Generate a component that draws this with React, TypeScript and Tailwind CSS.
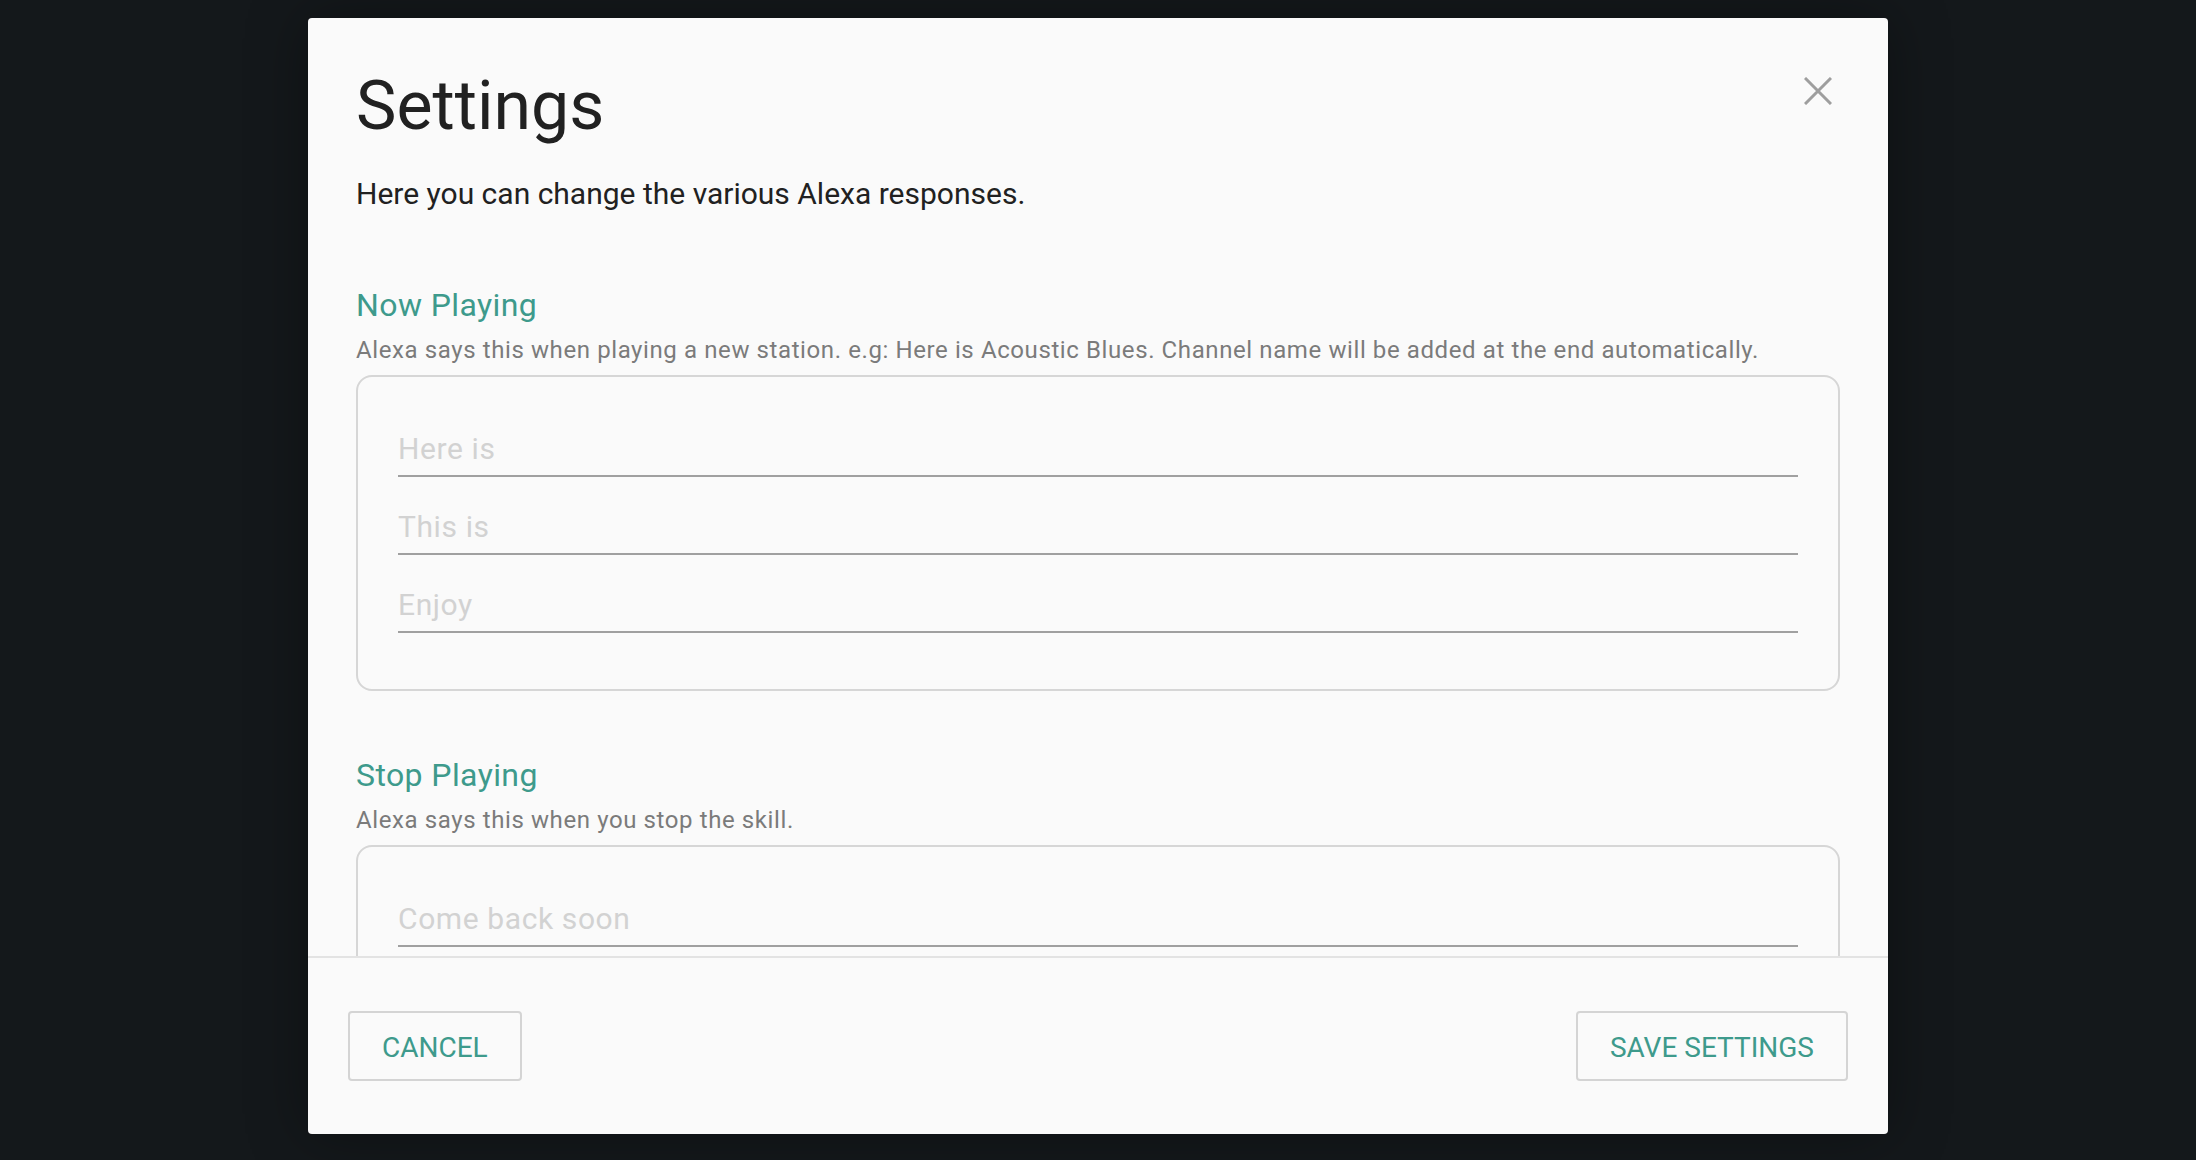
import { useState } from 'react';

interface Section {
  id: string;
  title: string;
  hint: string;
  placeholders: string[];
}

const sections: Section[] = [
  {
    id: 'now',
    title: 'Now Playing',
    hint: 'Alexa says this when playing a new station. e.g: Here is Acoustic Blues. Channel name will be added at the end automatically.',
    placeholders: ['Here is', 'This is', 'Enjoy'],
  },
  {
    id: 'stop',
    title: 'Stop Playing',
    hint: 'Alexa says this when you stop the skill.',
    placeholders: ['Come back soon', 'Goodbye'],
  },
];

export default function App() {
  const [values, setValues] = useState<Record<string, string>>({});

  const update = (key: string, value: string) => {
    setValues(prev => ({ ...prev, [key]: value }));
  };

  return (
    <div
      className="min-h-screen bg-[#14181b] flex justify-center pt-[18px]"
      style={{ fontFamily: 'Roboto, "Liberation Sans", sans-serif' }}
    >
      <div className="relative w-[1580px] h-[1116px] bg-[#fafafa] rounded-[4px] shadow-[0_0_60px_rgba(0,0,0,0.35)] flex flex-col overflow-hidden">
        {/* close */}
        <button className="absolute top-[59px] right-[56px] w-[28px] h-[28px]">
          <svg viewBox="0 0 28 28" width="28" height="28">
            <path d="M1 1 L27 27 M27 1 L1 27" stroke="#9e9e9e" strokeWidth="3" fill="none" />
          </svg>
        </button>

        {/* scrolling body */}
        <div className="flex-1 overflow-hidden px-[48px] pt-[54px]">
          <h1 className="text-[68px] leading-[68px] text-[#212121] font-normal">Settings</h1>
          <p className="mt-[34px] text-[30px] leading-[40px] text-[#212121]">
            Here you can change the various Alexa responses.
          </p>

          {sections.map((section, i) => (
            <div key={section.id} className={i === 0 ? 'mt-[71px]' : 'mt-[64px]'}>
              <h2 className="text-[32px] leading-[40px] text-[#3e9a8c] font-normal tracking-[0.4px]">{section.title}</h2>
              <p className="mt-[9px] text-[24px] leading-[32px] text-[#7b7b7b] tracking-[0.6px]">{section.hint}</p>
              <div className="mt-[9px] border-2 border-[#d6d6d6] rounded-[16px] px-[40px] pt-[44px] pb-[56px] flex flex-col gap-[22px]">
                {section.placeholders.map(ph => (
                  <input
                    key={ph}
                    value={values[section.id + ph] || ''}
                    onChange={e => update(section.id + ph, e.target.value)}
                    placeholder={ph}
                    className="h-[56px] w-full bg-transparent border-b-2 border-[#a0a0a0] text-[30px] tracking-[0.6px] text-[#212121] placeholder:text-[#d2d2d2] outline-none"
                  />
                ))}
              </div>
            </div>
          ))}
        </div>

        {/* footer */}
        <div className="border-t-2 border-[#e3e3e3] px-[40px] h-[178px] flex items-center justify-between">
          <button className="h-[70px] px-[32px] pt-[4px] border-2 border-[#d4d4d4] rounded-[4px] text-[28px] text-[#3e9a8c] uppercase">
            Cancel
          </button>
          <button className="h-[70px] px-[32px] pt-[4px] border-2 border-[#d4d4d4] rounded-[4px] text-[28px] text-[#3e9a8c] uppercase">
            Save Settings
          </button>
        </div>
      </div>
    </div>
  );
}
